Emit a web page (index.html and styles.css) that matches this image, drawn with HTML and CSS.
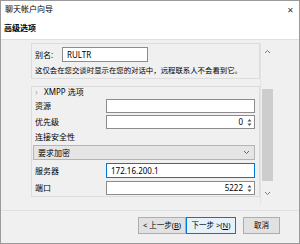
FILE: index.html
```html
<html>
<head>
	<meta charset="utf-8">
	<link rel="stylesheet" href="styles.css">
</head>
<body>
	<div class="window">
		<div class="titlebar">
			<div class="title">聊天帐户向导</div>
			<div class="close">✕</div>
		</div>
		<div class="header">高级选项</div>
		<div class="body">
			<div class="scrollarea">
				<div class="viewport">
					<div class="frame">
						<div class="alias_row">
							<div class="alias_label">别名:</div>
							<div class="input alias_input">RULTR</div>
						</div>
						<div class="note">这仅会在您交谈时显示在您的对话中，远程联系人不会看到它。</div>
					</div>
					<div class="group">
						<div class="group_title"><span class="chevron">›</span>XMPP 选项</div>
						<div class="row">
							<div class="label">资源</div>
							<div class="input field"></div>
						</div>
						<div class="row">
							<div class="label">优先级</div>
							<div class="input field spin">
								<span class="value">0</span>
								<svg class="arrows" width="5" height="9" viewBox="0 0 5 9"><path d="M0.5 3.5 L2.5 1 L4.5 3.5 Z M0.5 5.5 L2.5 8 L4.5 5.5 Z" fill="#555"/></svg>
							</div>
						</div>
						<div class="section_label">连接安全性</div>
						<div class="combo">
							<span>要求加密</span>
							<svg width="7" height="5" viewBox="0 0 7 5"><path d="M1 1 L3.5 3.5 L6 1" stroke="#666" fill="none"/></svg>
						</div>
						<div class="row server_row">
							<div class="label">服务器</div>
							<div class="input field focus">172.16.200.1</div>
						</div>
						<div class="row port_row">
							<div class="label">端口</div>
							<div class="input field spin">
								<span class="value">5222</span>
								<svg class="arrows" width="5" height="9" viewBox="0 0 5 9"><path d="M0.5 3.5 L2.5 1 L4.5 3.5 Z M0.5 5.5 L2.5 8 L4.5 5.5 Z" fill="#555"/></svg>
							</div>
						</div>
					</div>
				</div>
				<div class="scrollbar">
					<svg class="sb_arrow" width="7" height="5" viewBox="0 0 7 5"><path d="M1 4 L3.5 1.5 L6 4" stroke="#777" fill="none"/></svg>
					<div class="thumb_track"><div class="thumb"></div></div>
					<svg class="sb_arrow" width="7" height="5" viewBox="0 0 7 5"><path d="M1 1 L3.5 3.5 L6 1" stroke="#777" fill="none"/></svg>
				</div>
			</div>
			<div class="separator"></div>
			<div class="buttons">
				<div class="button back">&lt; 上一步(<u>B</u>)</div>
				<div class="button next">下一步 &gt;(<u>N</u>)</div>
				<div class="button cancel">取消</div>
			</div>
		</div>
	</div>
</body>
</html>
```

FILE: styles.css
```css
body
{
	margin: 0;
	font-family: "Noto Sans", "Noto Sans CJK SC", sans-serif;
	font-size: 8px;
	color: #000;
}
.window
{
	width: 300px;
	height: 244px;
	box-sizing: border-box;
	border: 1px solid #9a9a9a;
	display: flex;
	flex-direction: column;
	background-color: #f0f0f0;
}
.titlebar
{
	height: 16px;
	background-color: white;
	display: flex;
	align-items: center;
	justify-content: space-between;
	padding: 0 5px 0 4px;
}
.title
{
	line-height: 16px;
}
.close
{
	font-size: 8px;
	color: #333;
}
.header
{
	height: 23px;
	box-sizing: border-box;
	background-color: white;
	border-bottom: 1px solid #dfdfdf;
	font-weight: bold;
	line-height: 21px;
	padding-left: 3px;
}
.body
{
	flex: 1;
	display: flex;
	flex-direction: column;
	padding-top: 3px;
}
.scrollarea
{
	margin-left: 30px;
	width: 243px;
	height: 161px;
	display: flex;
}
.viewport
{
	width: 229px;
	overflow: hidden;
}
.frame
{
	border: 1px solid #dcdcdc;
	padding: 3px 3px 3px 3px;
}
.alias_row
{
	display: flex;
	align-items: center;
}
.alias_label
{
	width: 27px;
}
.input
{
	box-sizing: border-box;
	background-color: white;
	border: 1px solid #8c8c8c;
	height: 14px;
	line-height: 12px;
	padding: 0 4px;
}
.alias_input
{
	width: 86px;
	height: 15px;
	line-height: 13px;
}
.note
{
	margin-top: 3px;
	line-height: 10px;
	font-size: 7.4px;
	white-space: nowrap;
}
.group
{
	margin-top: 7px;
	border: 1px solid #dcdcdc;
	padding: 0 3px 3px 3px;
	height: 111px;
	box-sizing: border-box;
}
.group_title
{
	height: 10px;
	line-height: 10px;
	display: flex;
	align-items: center;
}
.chevron
{
	color: #aaa;
	width: 9px;
	font-size: 9px;
}
.row
{
	display: flex;
	align-items: center;
	margin-top: 2px;
}
.label
{
	width: 71px;
	line-height: 12px;
}
.field
{
	width: 149px;
}
.spin
{
	display: flex;
	justify-content: flex-end;
	align-items: center;
	padding-right: 2px;
}
.value
{
	margin-right: 4px;
}
.section_label
{
	margin-top: 2px;
	line-height: 12px;
}
.combo
{
	margin-top: 2px;
	margin-left: -2px;
	width: 222px;
	height: 15px;
	box-sizing: border-box;
	background-color: #e5e5e5;
	border: 1px solid #b4b4b4;
	display: flex;
	justify-content: space-between;
	align-items: center;
	padding: 0 4px 0 4px;
}
.server_row
{
	margin-top: 3px;
}
.server_row .field
{
	height: 15px;
	line-height: 13px;
}
.focus
{
	border-color: #0078d7;
}
.port_row
{
	margin-top: 3px;
}
.scrollbar
{
	width: 13px;
	border-left: 1px solid #e3e3e3;
	display: flex;
	flex-direction: column;
	align-items: center;
	padding: 3px 0 5px 0;
}
.thumb_track
{
	flex: 1;
	width: 100%;
	padding: 32px 1px 7px 1px;
	box-sizing: border-box;
}
.thumb
{
	background-color: #cdcdcd;
	height: 100%;
}
.sb_arrow
{
	margin: 3px 0;
}
.separator
{
	margin-top: 6px;
	border-top: 1px solid #dfdfdf;
}
.buttons
{
	margin-top: 6px;
	display: flex;
	justify-content: flex-end;
	padding-right: 19px;
}
.button
{
	box-sizing: border-box;
	height: 17px;
	line-height: 15px;
	border: 1px solid #adadad;
	background-color: #e1e1e1;
	text-align: center;
	font-size: 7.5px;
}
.back
{
	width: 48px;
}
.next
{
	width: 50px;
	border-color: #0078d7;
	background-color: #e5f1fb;
}
.cancel
{
	width: 37px;
	margin-left: 7px;
}
```
